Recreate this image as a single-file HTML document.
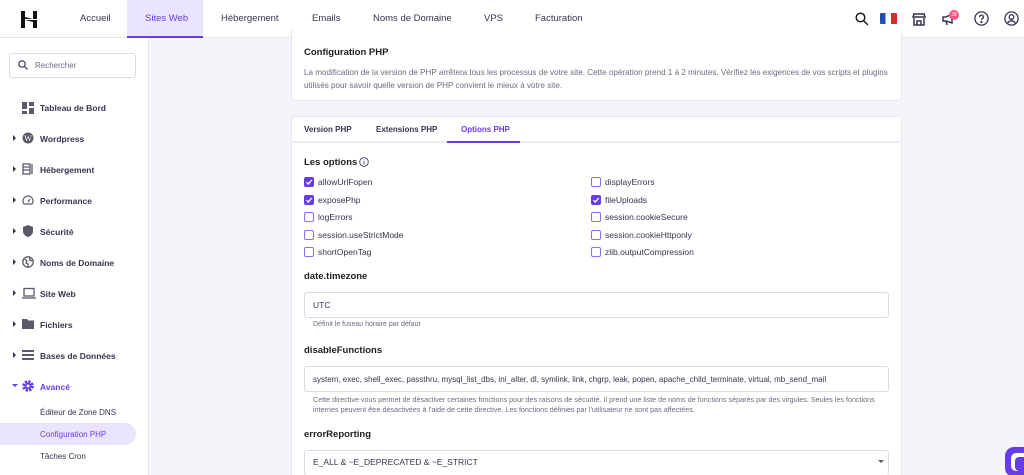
<!DOCTYPE html>
<html><head><meta charset="utf-8"><style>
*{box-sizing:border-box;margin:0;padding:0}
html,body{width:1024px;height:475px;overflow:hidden}
body{background:#f4f4fb;font-family:"Liberation Sans",sans-serif;color:#2f1c6a;position:relative}
.abs{position:absolute}
.hdr{left:0;top:0;width:1024px;height:38px;background:#fff;border-bottom:1px solid #e6e6ef}
.nav{top:13px;font-size:9.5px;color:#36344d;white-space:nowrap}
.side{left:0;top:38px;width:149px;height:437px;background:#fff;border-right:1px solid #e4e4ee}
.si{left:40px;font-size:8.5px;font-weight:bold;color:#36344d;white-space:nowrap}
.ar{left:13px;width:0;height:0;border-top:3px solid transparent;border-bottom:3px solid transparent;border-left:3px solid #36344d}
.ic{left:22px;width:12px;height:12px}
.card{background:#fff;border:1px solid #e6e6ef;border-radius:4px}
.t{font-size:8.5px;color:#36344d;white-space:nowrap}
.s{font-size:8px;color:#6d6b80;white-space:nowrap}
.h{font-size:9.5px;font-weight:bold;color:#1d1e20;white-space:nowrap}
.cb{width:10px;height:10px;border:1px solid #8c6cf2;border-radius:2px;background:#fff}
.cb.on{background:#673de6;border-color:#673de6}
.cb svg{position:absolute;left:0;top:0}
.inp{left:304px;width:585px;height:26px;border:1px solid #dadce0;border-radius:3px;background:#fff}
</style></head><body>
<div class="abs hdr"></div>
<svg class="abs" style="left:21px;top:11px" width="16" height="17" viewBox="0 0 16 17"><path d="M0 0h4v6l8 2V0h4v8H4v1h12v8h-4v-6L4 9v8H0z" fill="#111"/></svg>
<div class="abs nav" style="left:80px">Accueil</div>
<div class="abs" style="left:127px;top:0;width:76px;height:38px;background:#ebe4ff;border-bottom:2px solid #673de6"></div>
<div class="abs nav" style="left:145px;color:#673de6">Sites Web</div>
<div class="abs nav" style="left:221px">Hébergement</div>
<div class="abs nav" style="left:312px">Emails</div>
<div class="abs nav" style="left:373px">Noms de Domaine</div>
<div class="abs nav" style="left:484px">VPS</div>
<div class="abs nav" style="left:535px">Facturation</div>
<svg class="abs" style="left:855px;top:12px" width="14" height="14" viewBox="0 0 14 14" fill="none" stroke="#1d1e20" stroke-width="1.5"><circle cx="5.5" cy="5.5" r="4.3"/><path d="M9 9l4 4"/></svg>
<div class="abs" style="left:880px;top:13px;width:17px;height:11px;border-radius:1px;background:linear-gradient(90deg,#1f4fb0 33%,#fff 33%,#fff 66%,#e2262d 66%)"></div>
<svg class="abs" style="left:912px;top:12px" width="14" height="14" viewBox="0 0 14 14" fill="none" stroke="#36344d" stroke-width="1.5"><path d="M1 2h12M1 5h12l-1-3H2zM2 6v7h10V6M5 13V9h4v4"/></svg>
<svg class="abs" style="left:942px;top:13px" width="14" height="13" viewBox="0 0 14 13" fill="none" stroke="#36344d" stroke-width="1.5"><path d="M1 4h3l6-3v9L4 8H1zM4 8l1 4"/></svg>
<div class="abs" style="left:949px;top:10px;width:10px;height:10px;border-radius:50%;background:#fc5185;color:#fff;font-size:5px;text-align:center;line-height:10px">28</div>
<svg class="abs" style="left:974px;top:11px" width="15" height="15" viewBox="0 0 15 15" fill="none" stroke="#36344d" stroke-width="1.3"><circle cx="7.5" cy="7.5" r="6.6"/><path d="M5.6 6a1.9 1.9 0 1 1 2.6 1.8c-.5.2-.7.6-.7 1.2"/><circle cx="7.5" cy="11" r=".5" fill="#36344d"/></svg>
<svg class="abs" style="left:1004px;top:11px" width="15" height="15" viewBox="0 0 15 15" fill="none" stroke="#36344d" stroke-width="1.3"><circle cx="7.5" cy="7.5" r="6.6"/><circle cx="7.5" cy="6" r="2.3"/><path d="M3.5 12.3c1-1.8 2.3-2.5 4-2.5s3 .7 4 2.5"/></svg>

<div class="abs side"></div>
<div class="abs" style="left:9px;top:53px;width:127px;height:25px;border:1px solid #dadce0;border-radius:3px"></div>
<svg class="abs" style="left:18px;top:60px" width="10" height="10" viewBox="0 0 10 10" fill="none" stroke="#36344d" stroke-width="1.2"><circle cx="4" cy="4" r="3.2"/><path d="M6.5 6.5L9.5 9.5"/></svg>
<div class="abs s" style="left:35px;top:61px;font-size:8px">Rechercher</div>

<svg class="abs ic" style="top:102px" viewBox="0 0 12 12" fill="#5b5a6b"><rect x="0" y="0" width="5" height="7"/><rect x="7" y="0" width="5" height="4"/><rect x="0" y="9" width="5" height="3"/><rect x="7" y="6" width="5" height="6"/></svg>
<div class="abs si" style="top:103px">Tableau de Bord</div>

<div class="abs ar" style="top:135px"></div>
<svg class="abs ic" style="top:132px" viewBox="0 0 12 12"><circle cx="6" cy="6" r="5.5" fill="#5b5a6b"/><text x="6" y="9" font-size="8" text-anchor="middle" fill="#fff" font-family="Liberation Serif">W</text></svg>
<div class="abs si" style="top:134px">Wordpress</div>

<div class="abs ar" style="top:166px"></div>
<svg class="abs ic" style="top:163px" viewBox="0 0 12 12" fill="none" stroke="#5b5a6b" stroke-width="1.3"><rect x="1" y="1" width="7" height="10"/><path d="M1 4h7M1 7h7M10 1v10"/></svg>
<div class="abs si" style="top:165px">Hébergement</div>

<div class="abs ar" style="top:197px"></div>
<svg class="abs ic" style="top:194px" viewBox="0 0 12 12" fill="none" stroke="#5b5a6b" stroke-width="1.2"><path d="M2 10a5 5 0 1 1 8 0z"/><path d="M6 8l2-3"/></svg>
<div class="abs si" style="top:196px">Performance</div>

<div class="abs ar" style="top:228px"></div>
<svg class="abs ic" style="top:225px" viewBox="0 0 12 12" fill="#5b5a6b"><path d="M6 0l5 2v4c0 3-2 5-5 6-3-1-5-3-5-6V2z"/></svg>
<div class="abs si" style="top:227px">Sécurité</div>

<div class="abs ar" style="top:259px"></div>
<svg class="abs ic" style="top:256px" viewBox="0 0 12 12" fill="none" stroke="#5b5a6b" stroke-width="1.3"><circle cx="6" cy="6" r="5.2"/><path d="M3 3l2 2-1 2 2 1v3M8 1.5l-.5 2.5 2.5 1"/></svg>
<div class="abs si" style="top:258px">Noms de Domaine</div>

<div class="abs ar" style="top:290px"></div>
<svg class="abs ic" style="top:287px;width:14px" viewBox="0 0 14 12" fill="none" stroke="#5b5a6b" stroke-width="1.3"><rect x="2" y="1.5" width="10" height="7.5"/><path d="M0 11h14"/></svg>
<div class="abs si" style="top:289px">Site Web</div>

<div class="abs ar" style="top:321px"></div>
<svg class="abs ic" style="top:318px" viewBox="0 0 12 12" fill="#5b5a6b"><path d="M0 1h5l1 1.5h6V11H0z"/></svg>
<div class="abs si" style="top:320px">Fichiers</div>

<div class="abs ar" style="top:352px"></div>
<svg class="abs ic" style="top:349px" viewBox="0 0 12 12" fill="#5b5a6b"><rect y="1" width="12" height="2"/><rect y="5" width="12" height="2"/><rect y="9" width="12" height="2"/></svg>
<div class="abs si" style="top:351px">Bases de Données</div>

<div class="abs" style="left:12px;top:384px;width:0;height:0;border-left:3px solid transparent;border-right:3px solid transparent;border-top:3px solid #673de6"></div>
<svg class="abs ic" style="top:380px" viewBox="0 0 12 12"><circle cx="6" cy="6" r="4.3" fill="none" stroke="#673de6" stroke-width="3" stroke-dasharray="2.2 1.2"/><circle cx="6" cy="6" r="3.5" fill="#673de6"/><circle cx="6" cy="6" r="1.5" fill="#fff"/></svg>
<div class="abs si" style="top:382px;color:#673de6">Avancé</div>

<div class="abs t" style="left:40px;top:408px;font-size:8px">Éditeur de Zone DNS</div>
<div class="abs" style="left:0;top:423px;width:136px;height:22px;background:#ebe4ff;border-radius:0 11px 11px 0"></div>
<div class="abs t" style="left:40px;top:430px;font-size:8px;color:#673de6">Configuration PHP</div>
<div class="abs t" style="left:40px;top:452px;font-size:8px">Tâches Cron</div>

<div class="abs card" style="left:291px;top:30px;width:611px;height:71px;border-top:none;border-radius:0 0 4px 4px"></div>
<div class="abs h" style="left:304px;top:47px">Configuration PHP</div>
<div class="abs s" style="left:304px;top:68px;font-size:8.1px">La modification de la version de PHP arrêtera tous les processus de votre site. Cette opération prend 1 à 2 minutes. Vérifiez les exigences de vos scripts et plugins</div>
<div class="abs s" style="left:304px;top:81px;font-size:8.1px">utilisés pour savoir quelle version de PHP convient le mieux à votre site.</div>

<div class="abs card" style="left:291px;top:116px;width:611px;height:370px"></div>
<div class="abs" style="left:291px;top:141px;width:611px;height:2px;background:#ececf3"></div>
<div class="abs t" style="left:304px;top:125px;font-weight:bold;font-size:8px">Version PHP</div>
<div class="abs t" style="left:376px;top:125px;font-weight:bold;font-size:8px">Extensions PHP</div>
<div class="abs t" style="left:461px;top:125px;font-weight:bold;font-size:8px;color:#673de6">Options PHP</div>
<div class="abs" style="left:447px;top:141px;width:73px;height:2px;background:#673de6"></div>

<div class="abs h" style="left:304px;top:157px">Les options</div>
<svg class="abs" style="left:359px;top:157px" width="10" height="10" viewBox="0 0 10 10" fill="none" stroke="#36344d" stroke-width=".9"><circle cx="5" cy="5" r="4.3"/><path d="M5 4.3v3M5 2.6v.6"/></svg>

<div class="abs cb on" style="left:304px;top:177px"><svg width="8" height="8" viewBox="0 0 8 8"><path d="M1.5 4.2l1.8 1.8L6.8 2" fill="none" stroke="#fff" stroke-width="1.3"/></svg></div><div class="abs t" style="left:318px;top:177px">allowUrlFopen</div>
<div class="abs cb on" style="left:304px;top:195px"><svg width="8" height="8" viewBox="0 0 8 8"><path d="M1.5 4.2l1.8 1.8L6.8 2" fill="none" stroke="#fff" stroke-width="1.3"/></svg></div><div class="abs t" style="left:318px;top:195px">exposePhp</div>
<div class="abs cb" style="left:304px;top:212px"></div><div class="abs t" style="left:318px;top:212px">logErrors</div>
<div class="abs cb" style="left:304px;top:230px"></div><div class="abs t" style="left:318px;top:230px">session.useStrictMode</div>
<div class="abs cb" style="left:304px;top:247px"></div><div class="abs t" style="left:318px;top:247px">shortOpenTag</div>
<div class="abs cb" style="left:591px;top:177px"></div><div class="abs t" style="left:605px;top:177px">displayErrors</div>
<div class="abs cb on" style="left:591px;top:195px"><svg width="8" height="8" viewBox="0 0 8 8"><path d="M1.5 4.2l1.8 1.8L6.8 2" fill="none" stroke="#fff" stroke-width="1.3"/></svg></div><div class="abs t" style="left:605px;top:195px">fileUploads</div>
<div class="abs cb" style="left:591px;top:212px"></div><div class="abs t" style="left:605px;top:212px">session.cookieSecure</div>
<div class="abs cb" style="left:591px;top:230px"></div><div class="abs t" style="left:605px;top:230px">session.cookieHttponly</div>
<div class="abs cb" style="left:591px;top:247px"></div><div class="abs t" style="left:605px;top:247px">zlib.outputCompression</div>

<div class="abs h" style="left:304px;top:271px">date.timezone</div>
<div class="abs inp" style="top:292px"></div>
<div class="abs t" style="left:313px;top:300px">UTC</div>
<div class="abs s" style="left:313px;top:321px;font-size:7px">Définit le fuseau horaire par défaut</div>

<div class="abs h" style="left:304px;top:345px">disableFunctions</div>
<div class="abs inp" style="top:366px"></div>
<div class="abs t" style="left:313px;top:375px;font-size:8px">system, exec, shell_exec, passthru, mysql_list_dbs, ini_alter, dl, symlink, link, chgrp, leak, popen, apache_child_terminate, virtual, mb_send_mail</div>
<div class="abs s" style="left:313px;top:395px;font-size:7.2px">Cette directive vous permet de désactiver certaines fonctions pour des raisons de sécurité. Il prend une liste de noms de fonctions séparés par des virgules. Seules les fonctions</div>
<div class="abs s" style="left:313px;top:405px;font-size:7.2px">internes peuvent être désactivées à l'aide de cette directive. Les fonctions définies par l'utilisateur ne sont pas affectées.</div>

<div class="abs h" style="left:304px;top:429px">errorReporting</div>
<div class="abs inp" style="top:450px"></div>
<div class="abs t" style="left:313px;top:457px">E_ALL &amp; ~E_DEPRECATED &amp; ~E_STRICT</div>
<div class="abs" style="left:878px;top:460px;border-left:3px solid transparent;border-right:3px solid transparent;border-top:3px solid #5b5a6b"></div>

<div class="abs" style="left:1005px;top:447px;width:30px;height:30px;border-radius:9px;background:#673de6"></div>
<div class="abs" style="left:1011px;top:453px;width:20px;height:18px;border-radius:5px;background:#fff"></div>
<div class="abs" style="left:1015px;top:457px;width:20px;height:14px;border-radius:4px;background:#673de6"></div>
</body></html>
